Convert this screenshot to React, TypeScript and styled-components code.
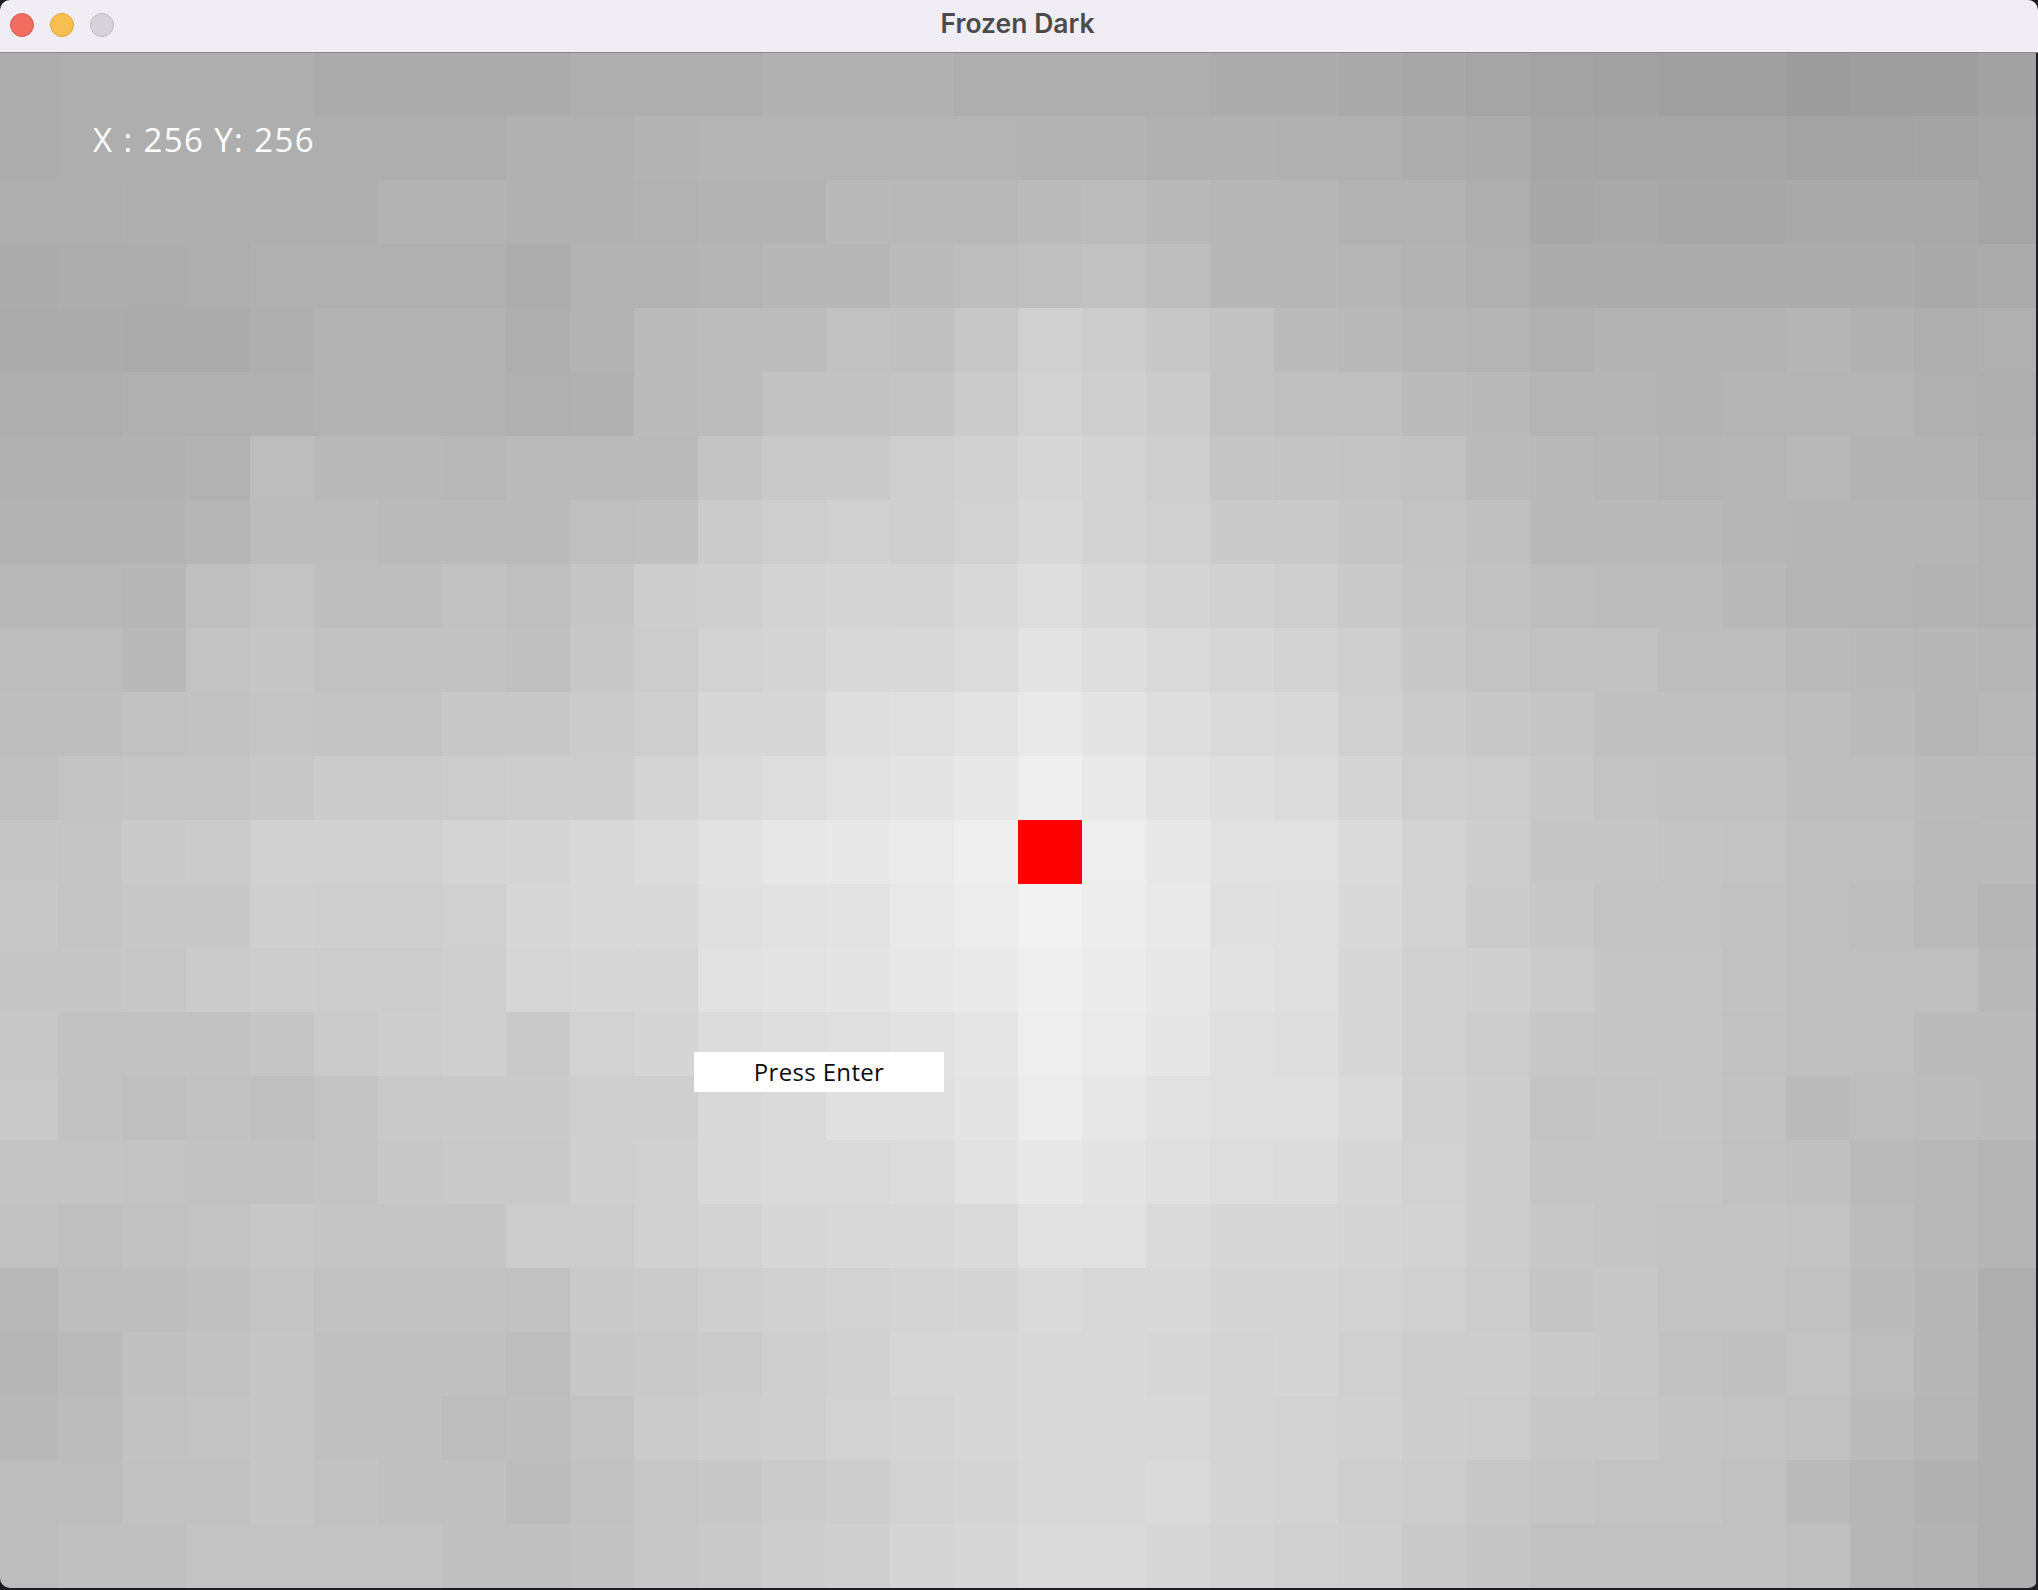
import React from "react";
import styled, { createGlobalStyle } from "styled-components";

const GlobalStyle = createGlobalStyle`
  html, body { margin: 0; padding: 0; background: #1d1d1f; }
  body { width: 2038px; height: 1590px; overflow: hidden; }
`;

const SHADES: string[] = [
  "ad ae ae ae ae ab ab ab ab ae ae ae b1 b1 b1 ae ae ae ae ac ac aa a8 a5 a3 a2 a0 a0 9d 9e 9e a2",
  "ad ae ae ae ae ae ae ae b1 b1 b3 b4 b4 b4 b4 b4 b3 b3 b1 b1 b0 b0 ad ab a6 a5 a5 a5 a3 a3 a4 a5",
  "ae ae af af af af b2 b2 b1 b1 b2 b3 b3 b9 b8 b8 bb bc b9 b7 b7 b2 b2 ae a8 a9 a8 a8 a9 a9 a9 a5",
  "ac ad ad ae b0 b0 b0 b0 ad b3 b3 b4 b7 b7 bb bd bf c1 be b7 b7 b6 b3 b0 ac ac ac ac ac ac aa ab",
  "ab ac ab ab af b2 b2 b2 ae b3 bb bc bc c1 c0 c7 d0 cc c7 c2 bb b9 b6 b4 b0 b3 b3 b3 b5 b1 ae b0",
  "ae ae b0 b0 b0 b2 b2 b2 b0 b1 bb bc c2 c2 c4 cb d2 cf cb c2 bf bf bb b9 b4 b4 b3 b4 b4 b4 b0 ae",
  "b1 b1 b1 b2 bd b9 b9 b8 ba ba ba c4 c9 c9 ce d1 d6 d3 ce c6 c4 c3 c2 bb b9 b7 b4 b6 b8 b3 b3 b0",
  "b3 b3 b3 b6 bc bc ba ba ba bf c0 cb ce d0 ce d2 d8 d3 d0 ca ca c6 c3 c0 b9 b9 b9 b6 b5 b5 b5 b2",
  "b8 b8 b7 bf c3 be be c1 bf c6 cd cf d3 d5 d5 d8 dd d9 d4 d1 ce ca c5 c2 bd bc bc b9 b5 b5 b3 b2",
  "bd bd b9 c3 c6 c2 c2 c2 c0 c8 cc d2 d4 d8 d9 db e3 de da d6 d3 ce c8 c4 c1 c1 bd bd ba b9 b7 b6",
  "be be c1 c2 c5 c4 c4 c8 c8 cb ce d7 d7 de e0 e3 e9 e4 de da d8 d0 cb c8 c6 c0 c0 c0 be bb b7 b8",
  "bf c3 c5 c5 c8 cb cb cc cd cd d4 da dd e1 e4 e8 ef e9 e2 de db d5 ce cc c7 c3 c2 c2 be be bb ba",
  "c6 c5 ca cb d1 d1 d1 d4 d5 d8 db e2 e7 e8 ea ee ee ee e8 e1 e1 da d2 cd c6 c6 c4 c3 bf bf ba bb",
  "c8 c5 c8 c8 cf ce ce d0 d7 d8 d9 e0 e2 e3 e9 ec f2 ed e9 e0 df d9 d2 cb c8 c4 c4 c2 bf bd ba b6",
  "c6 c6 c7 cb cd cc cc ce d6 d7 d6 e1 e3 e4 e8 e9 ef eb e8 e2 df d7 d0 cf cb c6 c6 c2 bf bf bf b8",
  "c7 c2 c2 c2 c6 cb cd ce c9 d2 d5 dc dd df e2 e5 ee ea e6 df de d7 d0 cc c7 c6 c6 c1 bf bf bb bb",
  "c9 c2 bf c1 bf c4 c9 ca ca cf cf d8 da e0 e0 e4 ec e7 e1 df df da d1 cd c4 c5 c6 c2 bb bd bc bb",
  "c4 c4 c3 c2 c2 c4 c8 c9 c9 cf d0 d8 da da db e2 e8 e4 e0 dd dc d7 d2 cd c5 c5 c5 c1 c0 ba b8 b5",
  "c1 bf c1 c3 c7 c5 c5 c5 cc cc d0 d3 d7 d8 d9 da e1 e1 da d7 d7 d5 d3 cd c7 c5 c4 c4 c3 bc b8 b5",
  "b8 be be c0 c5 c2 c2 c2 c1 ca cb cf d1 d2 d4 d5 da d8 d9 d5 d5 d2 d0 cc c6 c8 c3 c3 c1 bb b7 ae",
  "b6 ba c0 c1 c6 c0 c0 c0 bd c7 c9 cb cf d1 d6 d6 d9 d9 d7 d4 d5 d0 cd cd ca c8 c1 c0 c3 bd b7 af",
  "b9 bc c2 c3 c6 c0 c0 bd be c3 cb cd cf d2 d4 d6 d9 d9 d8 d4 d3 d1 cd cc c7 c7 c4 c3 c1 bb b6 af",
  "bd bd c1 c1 c6 c2 c0 c0 bc c1 c7 c8 cb cd d3 d5 d8 d8 da d4 d3 ce cc c7 c5 c3 c3 c1 bb b6 b1 af",
  "bd c0 c0 c3 c3 c3 c3 c0 c0 c2 c7 c9 cd cf d5 d7 da da d7 d3 d0 cf ca c6 c1 c1 c1 c1 bf b6 b3 ae",
];

const COLOR_ROWS = SHADES.map((row) => row.split(" "));

const PLAYER = { row: 12, col: 16 };

const Win = styled.div`
  position: relative;
  width: 2038px;
  height: 1588px;
  display: flex;
  flex-direction: column;
  border-radius: 10px;
  overflow: hidden;
`;

const TitleBar = styled.header`
  height: 53px;
  box-sizing: border-box;
  flex: none;
  background: #f0eef4;
  border-bottom: 1px solid #8a8a8a;
  display: flex;
  align-items: center;
  padding: 0 0 2px 10px;
  position: relative;
  margin-bottom: -1px;
  z-index: 1;
`;

const Lights = styled.div`
  display: flex;
  gap: 16px;
`;

const Light = styled.span<{ $fill: string; $edge: string }>`
  width: 24px;
  height: 24px;
  box-sizing: border-box;
  border-radius: 50%;
  background: ${(p) => p.$fill};
  border: 1px solid ${(p) => p.$edge};
`;

const Title = styled.h1`
  position: absolute;
  left: 0;
  right: 3px;
  top: 0;
  margin: 0;
  text-align: center;
  font: 600 26.5px/46px "Inter", "Roboto", "Liberation Sans", sans-serif;
  color: #4b4a4d;
`;

const Canvas = styled.main`
  position: relative;
  display: grid;
  grid-template-columns: 58px repeat(30, 64px) 58px;
  grid-auto-rows: 64px;
`;

const Tile = styled.div<{ $shade: string }>`
  background: #${(p) => p.$shade}${(p) => p.$shade}${(p) => p.$shade};
`;

const PlayerTile = styled.div`
  background: #ff0000;
`;

const Coordinates = styled.div`
  position: absolute;
  left: 93px;
  top: 66px;
  color: #ffffff;
  font: 400 33px/44px "Open Sans", "DejaVu Sans", sans-serif;
  letter-spacing: 1.4px;
`;

const Prompt = styled.div`
  position: absolute;
  left: 694px;
  top: 1000px;
  width: 250px;
  height: 40px;
  background: #ffffff;
  color: #0c0c0c;
  font: 400 24px/40px "Open Sans", "DejaVu Sans", sans-serif;
  letter-spacing: 0.35px;
  text-align: center;
`;

export default function App() {
  return (
    <>
      <GlobalStyle />
      <Win>
        <TitleBar>
          <Lights>
            <Light $fill="#f26d60" $edge="#dc5a4e" />
            <Light $fill="#f6bf50" $edge="#dea63c" />
            <Light $fill="#d6d4da" $edge="#bdbbc2" />
          </Lights>
          <Title>Frozen Dark</Title>
        </TitleBar>
        <Canvas>
          {COLOR_ROWS.map((cols, r) =>
            cols.map((shade, c) =>
              r === PLAYER.row && c === PLAYER.col ? (
                <PlayerTile key={`${r}-${c}`} />
              ) : (
                <Tile key={`${r}-${c}`} $shade={shade} />
              )
            )
          )}
          <Coordinates>X : 256 Y: 256</Coordinates>
          <Prompt>Press Enter</Prompt>
        </Canvas>
      </Win>
    </>
  );
}
